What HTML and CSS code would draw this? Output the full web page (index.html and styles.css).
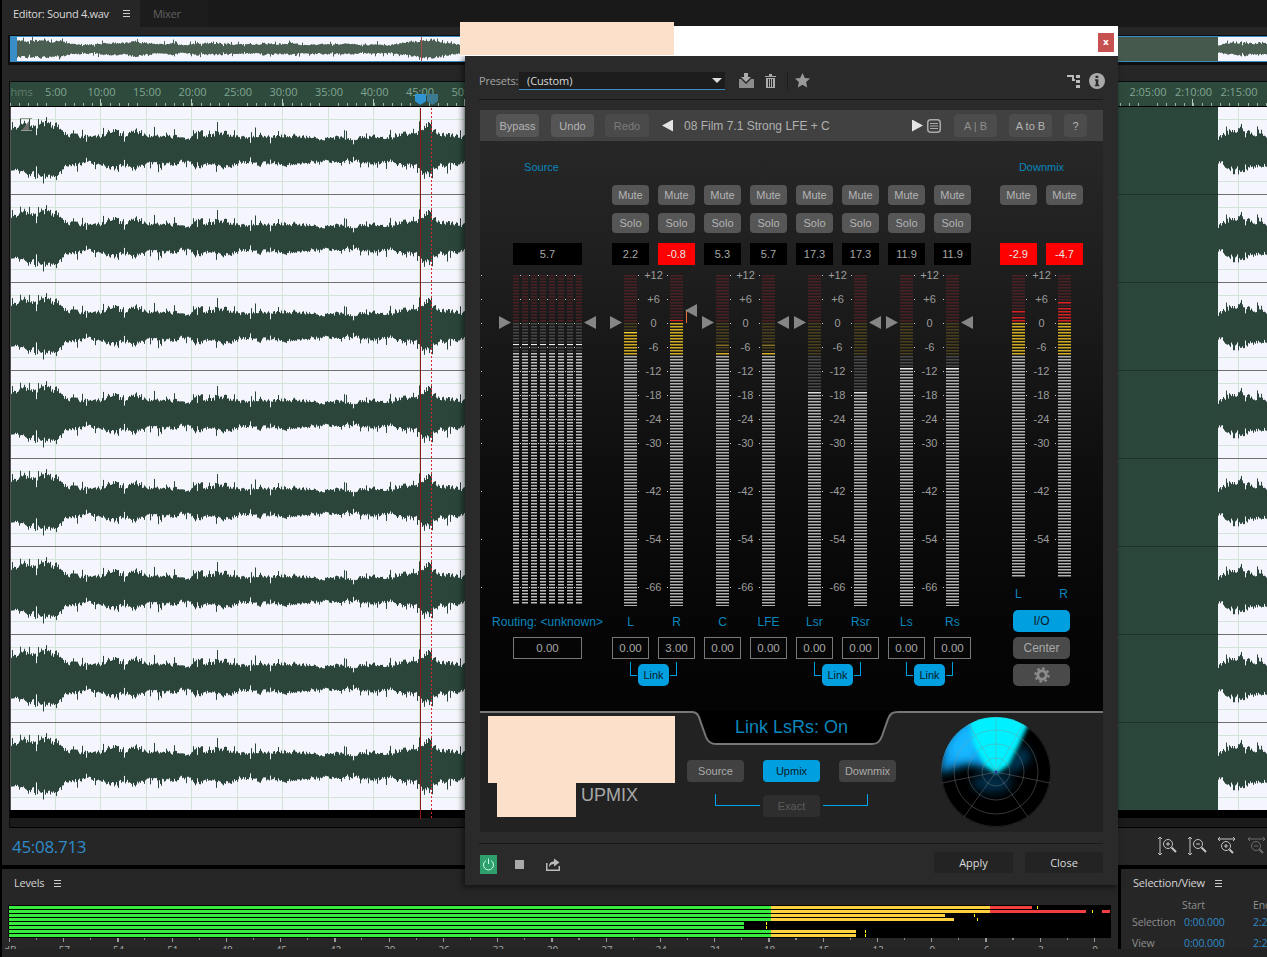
FILE: index.html
```html
<!DOCTYPE html>
<html lang="en">
<head>
<meta charset="utf-8">
<title>Editor: Sound 4.wav</title>
<link rel="stylesheet" href="styles.css">
</head>
<body>
<div class="app">
  <div class="tabs">
    <div class="tab active">Editor: Sound 4.wav<i class="ham"></i></div>
    <div class="tab dim">Mixer</div>
  </div>

  <div class="editor">
    <div class="ov">
      <div class="ovi">
        <svg id="ovwave" class="fill" width="1257" height="24"></svg>
        <div class="ovsel"></div>
        <div class="ovhandle"></div>
        <div class="ovhead"></div>
      </div>
    </div>

    <div class="track">
      <div class="ruler">
        <span class="hms">hms</span>
        <span>5:00</span><span>10:00</span><span>15:00</span><span>20:00</span><span>25:00</span><span>30:00</span><span>35:00</span><span>40:00</span><span>45:00</span><span>50:00</span>
        <span class="rgap"></span>
        <span>2:05:00</span><span>2:10:00</span><span>2:15:00</span>
        <i class="cti a"></i><i class="cti b"></i>
      </div>
      <div class="wave">
        <svg id="wave" class="fill" width="1256" height="703"></svg>
        <div class="wavesel"></div>
        <svg class="clipmark" width="12" height="13" viewBox="0 0 12 13"><path d="M0 .5H12M1 12.5H12" stroke="#999" fill="none"/><path d="M2 12L9 3V12Z" fill="#6c6c6c"/></svg>
      </div>
      <div class="wavefoot"></div>
      <div class="wavestrip"></div>
      <div class="head solid"></div>
      <div class="head dashed"></div>
    </div>

    <div class="transport">
      <span class="time">45:08.713</span>
      <div class="ztools">
        <svg width="20" height="20" viewBox="0 0 20 20"><path d="M3 1V19M1 3L3 1L5 3M1 17L3 19L5 17" class="zs"/><circle cx="11" cy="8" r="4.5" class="zs"/><path d="M14.5 11.5L19 16" class="zt"/><path d="M9 8H13M11 6V10" class="zs"/></svg>
        <svg width="20" height="20" viewBox="0 0 20 20"><path d="M3 1V19M1 3L3 1L5 3M1 17L3 19L5 17" class="zs"/><circle cx="11" cy="8" r="4.5" class="zs"/><path d="M14.5 11.5L19 16" class="zt"/><path d="M9 8H13" class="zs"/></svg>
        <svg width="20" height="20" viewBox="0 0 20 20"><path d="M1 3H18M3 1L1 3L3 5M16 1L18 3L16 5" class="zs"/><circle cx="9" cy="10" r="4.5" class="zs"/><path d="M12.5 13.5L16 17" class="zt"/><path d="M7 10H11M9 8V12" class="zs"/></svg>
        <svg class="zdim" width="20" height="20" viewBox="0 0 20 20"><path d="M1 3H18M3 1L1 3L3 5M16 1L18 3L16 5" class="zs"/><circle cx="9" cy="10" r="4.5" class="zs"/><path d="M12.5 13.5L16 17" class="zt"/><path d="M7 10H11" class="zs"/></svg>
      </div>
    </div>
  </div>

  <div class="bottom">
    <div class="levels">
      <div class="phead">Levels<i class="ham"></i></div>
      <div class="lv">
        <div class="lvbar"><b class="g"></b><b class="y" style="width:219px"></b><b class="r" style="width:42px"></b><i class="pk" style="left:1028px"></i></div>
        <div class="lvbar"><b class="g"></b><b class="y" style="width:219px"></b><b class="r" style="width:96px"></b><i class="pk" style="left:1083px"></i><i class="clip"></i></div>
        <div class="lvbar"><b class="g"></b><b class="y" style="width:174px"></b><i class="pk" style="left:965px"></i></div>
        <div class="lvbar"><b class="g"></b><b class="y" style="width:183px"></b><i class="pk" style="left:968px"></i></div>
        <div class="lvbar"><b class="g" style="width:735px"></b><i class="pk" style="left:757px"></i></div>
        <div class="lvbar"><b class="g" style="width:735px"></b><i class="pk" style="left:757px"></i></div>
        <div class="lvbar"><b class="g"></b><b class="y" style="width:85px"></b><i class="pk" style="left:856px"></i></div>
        <div class="lvbar"><b class="g"></b><b class="y" style="width:85px"></b><i class="pk" style="left:856px"></i></div>
      </div>
      <div class="lvticks"></div>
      <div class="lvlabels"><span>dB</span><span>57</span><span>54</span><span>51</span><span>48</span><span>45</span><span>42</span><span>39</span><span>36</span><span>33</span><span>30</span><span>27</span><span>24</span><span>21</span><span>18</span><span>15</span><span>12</span><span>9</span><span>6</span><span>3</span><span>0</span></div>
    </div>
    <div class="selview">
      <div class="phead">Selection/View<i class="ham"></i></div>
      <div class="svgrid">
        <span></span><span class="svh">Start</span><span class="svh">End</span>
        <span>Selection</span><span class="blue">0:00.000</span><span class="blue">2:20:41.000</span>
        <span>View</span><span class="blue">0:00.000</span><span class="blue">2:20:41.000</span>
      </div>
    </div>
  </div>
  <div class="status"></div>

  <div class="dlgwrap">
    <div class="titlebar">
      <div class="peach pt"></div>
      <div class="xbtn">x</div>
    </div>
    <div class="dlg">
      <div class="presets">
        <span class="plabel">Presets:</span>
        <div class="dd"><span>(Custom)</span><i class="ddarrow"></i></div>
        <svg class="pi1" width="17" height="15" viewBox="0 0 17 15"><path d="M6 0H10V4H13L8 9L3 4H6Z" fill="#aaa"/><path d="M1 6H3L8 11L13 6H16V15H1Z" fill="#8c8c8c"/></svg>
        <svg class="pi2" width="11" height="14" viewBox="0 0 11 14"><path d="M0 2H11V3H0ZM4 0H7V2H4Z" fill="#aaa"/><path d="M1 4H10V14H1ZM3 5V13H4V5ZM5 5V13H6V5ZM7 5V13H8V5Z" fill="#aaa" fill-rule="evenodd"/></svg>
        <i class="psep"></i>
        <svg class="pi3" width="15" height="15" viewBox="0 0 15 15"><path d="M7.5 0L9.8 5L15 5.6L11.1 9.1L12.2 14.5L7.5 11.8L2.8 14.5L3.9 9.1L0 5.6L5.2 5Z" fill="#9a9a9a"/></svg>
        <svg class="pi4" width="13" height="13" viewBox="0 0 13 13"><path d="M0 1H6V5H8" fill="none" stroke="#bbb" stroke-width="2"/><path d="M9 0H13V3H9ZM9 5H13V8H9ZM9 10H13V13H9Z" fill="#bbb"/></svg>
        <svg class="pi5" width="16" height="16" viewBox="0 0 16 16"><circle cx="8" cy="8" r="8" fill="#aaa"/><path d="M6.5 2.8H9.3V5H6.5ZM6 6.3H9.3V11.8H10.3V13.2H5.8V11.8H6.8V7.7H6Z" fill="#2a2a2a"/></svg>
      </div>

      <div class="plugin">
        <div class="ptool">
          <span class="tb b1">Bypass</span>
          <span class="tb b2">Undo</span>
          <span class="tb b3 off">Redo</span>
          <i class="arr l"></i>
          <span class="pname">08 Film 7.1 Strong LFE + C</span>
          <i class="arr r"></i>
          <svg class="listic" width="14" height="14" viewBox="0 0 14 14"><rect x=".75" y=".75" width="12.5" height="12.5" rx="3" fill="none" stroke="#aaa" stroke-width="1.5"/><path d="M3 4.5H11M3 7H11M3 9.5H11" stroke="#aaa" stroke-width="1.2"/></svg>
          <span class="tb b4 dimt">A | B</span>
          <span class="tb b5">A to B</span>
          <span class="tb b6">?</span>
        </div>

        <div class="pmain">
          <div class="group src">
            <div class="hdr hdrs">Source</div>
            <div class="val r4">5.7</div>
            <div class="srcm r5">
              <i class="m s" style="--lit:78px;--pk:68px;--pc:#eee"></i><i class="m s" style="--lit:78px;--pk:68px;--pc:#eee"></i><i class="m s" style="--lit:78px;--pk:68px;--pc:#eee"></i><i class="m s" style="--lit:78px;--pk:68px;--pc:#eee"></i><i class="m s" style="--lit:78px;--pk:68px;--pc:#eee"></i><i class="m s" style="--lit:78px;--pk:68px;--pc:#eee"></i><i class="m s" style="--lit:78px;--pk:68px;--pc:#eee"></i><i class="m s" style="--lit:78px;--pk:68px;--pc:#eee"></i>
              <div class="ticks"><b></b><b></b><b></b><b></b><b></b><b></b><b></b><b></b><b class="w"></b><b class="w"></b><b class="w"></b></div>
              <i class="tri rt srct"></i><i class="tri lf srct"></i>
            </div>
            <div class="nm r6">Routing: &lt;unknown&gt;</div>
            <div class="gain r7">0.00</div>
          </div>

          <div class="group chs">
            <span class="btn r2">Mute</span><span class="btn r2">Mute</span><span class="btn r2">Mute</span><span class="btn r2">Mute</span><span class="btn r2">Mute</span><span class="btn r2">Mute</span><span class="btn r2">Mute</span><span class="btn r2">Mute</span>
            <span class="btn r3">Solo</span><span class="btn r3">Solo</span><span class="btn r3">Solo</span><span class="btn r3">Solo</span><span class="btn r3">Solo</span><span class="btn r3">Solo</span><span class="btn r3">Solo</span><span class="btn r3">Solo</span>
            <div class="val r4">2.2</div><div class="val r4 hot">-0.8</div><div class="val r4">5.3</div><div class="val r4">5.7</div><div class="val r4">17.3</div><div class="val r4">17.3</div><div class="val r4">11.9</div><div class="val r4">11.9</div>

            <div class="pair r5">
              <i class="tri rt"></i>
              <i class="m" style="--lit:57px;--pk:56px;--pc:#f0d030"></i>
              <div class="sc"><span>+12</span><span>+6</span><span>0</span><span>-6</span><span>-12</span><span>-18</span><span>-24</span><span>-30</span><span class="w">-42</span><span class="w">-54</span><span class="w">-66</span></div>
              <i class="m" style="--lit:48px;--pk:44px;--pc:#e02020"></i>
              <i class="tri lf up"></i><i class="gmark"></i>
            </div>
            <div class="pair r5">
              <i class="tri rt"></i>
              <i class="m" style="--lit:78px;--pk:70px;--pc:#f0d030"></i>
              <div class="sc"><span>+12</span><span>+6</span><span>0</span><span>-6</span><span>-12</span><span>-18</span><span>-24</span><span>-30</span><span class="w">-42</span><span class="w">-54</span><span class="w">-66</span></div>
              <i class="m" style="--lit:78px;--pk:70px;--pc:#f0d030"></i>
              <i class="tri lf"></i>
            </div>
            <div class="pair r5">
              <i class="tri rt"></i>
              <i class="m" style="--lit:120px;--pk:117px;--pc:#ddd"></i>
              <div class="sc"><span>+12</span><span>+6</span><span>0</span><span>-6</span><span>-12</span><span>-18</span><span>-24</span><span>-30</span><span class="w">-42</span><span class="w">-54</span><span class="w">-66</span></div>
              <i class="m" style="--lit:120px;--pk:117px;--pc:#ddd"></i>
              <i class="tri lf"></i>
            </div>
            <div class="pair r5">
              <i class="tri rt"></i>
              <i class="m" style="--lit:96px;--pk:93px;--pc:#eee"></i>
              <div class="sc"><span>+12</span><span>+6</span><span>0</span><span>-6</span><span>-12</span><span>-18</span><span>-24</span><span>-30</span><span class="w">-42</span><span class="w">-54</span><span class="w">-66</span></div>
              <i class="m" style="--lit:96px;--pk:93px;--pc:#eee"></i>
              <i class="tri lf"></i>
            </div>

            <div class="nm r6">L</div><div class="nm r6">R</div><div class="nm r6">C</div><div class="nm r6">LFE</div><div class="nm r6">Lsr</div><div class="nm r6">Rsr</div><div class="nm r6">Ls</div><div class="nm r6">Rs</div>
            <div class="gain r7">0.00</div><div class="gain r7">3.00</div><div class="gain r7">0.00</div><div class="gain r7">0.00</div><div class="gain r7">0.00</div><div class="gain r7">0.00</div><div class="gain r7">0.00</div><div class="gain r7">0.00</div>
            <div class="lnk c1"><span>Link</span></div>
            <div class="lnk c5"><span>Link</span></div>
            <div class="lnk c7"><span>Link</span></div>
          </div>

          <div class="group dn">
            <div class="hdr">Downmix</div>
            <span class="btn r2">Mute</span><span class="btn r2">Mute</span>
            <div class="val r4 hot">-2.9</div><div class="val r4 hot">-4.7</div>
            <div class="pair r5 short">
              <i class="m" style="--lit:42px;--pk:36px;--pc:#e02020"></i>
              <div class="sc"><span>+12</span><span>+6</span><span>0</span><span>-6</span><span>-12</span><span>-18</span><span>-24</span><span>-30</span><span class="w">-42</span><span class="w">-54</span></div>
              <i class="m" style="--lit:33px;--pk:27px;--pc:#e02020"></i>
              <div class="dnames"><span>L</span><span>R</span></div>
            </div>
            <span class="wide on r6x">I/O</span>
            <span class="wide r7x">Center</span>
            <span class="wide r8x"><svg width="16" height="16" viewBox="0 0 16 16"><circle cx="8" cy="8" r="4.2" fill="none" stroke="#8c8c8c" stroke-width="3"/><circle cx="8" cy="8" r="6.6" fill="none" stroke="#8c8c8c" stroke-width="2.2" stroke-dasharray="2.6 2.58"/></svg></span>
          </div>
        </div>

        <div class="lower">
          <svg class="notch" width="623" height="36" viewBox="0 0 623 36"><path d="M212 0V1C218 1 219 6 221 12L226 26C228 31 231 33 236 33H392C398 33 400 30 402 25L408 8C410 3 412 1 418 1V0Z" fill="#000"/><path d="M0 1H212C218 1 219 6 221 12L226 26C228 31 231 33 236 33H392C398 33 400 30 402 25L408 8C410 3 412 1 418 1H623" fill="none" stroke="#777" stroke-width="2"/></svg>
          <div class="brand">
            <div class="peach p1"></div>
            <div class="brow"><div class="peach p2"></div><span class="upmix">UPMIX</span></div>
          </div>
          <div class="modes">
            <div class="ltitle">Link LsRs: On</div>
            <div class="mrow"><span class="mb">Source</span><span class="mb on">Upmix</span><span class="mb">Downmix</span></div>
            <div class="xrow"><i class="brk bl"></i><span class="mb ex">Exact</span><i class="brk br"></i></div>
          </div>
          <svg class="radar" width="114" height="112" viewBox="0 0 114 112">
            <defs>
              <clipPath id="rc"><path d="M56 55m-55 0a55 55 0 1 0 110 0a55 55 0 1 0 -110 0Z"/></clipPath>
              <filter id="b1" x="-40%" y="-40%" width="180%" height="180%"><feGaussianBlur stdDeviation="5"/></filter>
              <filter id="b2" x="-40%" y="-40%" width="180%" height="180%"><feGaussianBlur stdDeviation="2"/></filter>
            </defs>
            <g clip-path="url(#rc)">
              <rect width="114" height="112" fill="#000"/>
              <ellipse cx="52" cy="66" rx="20" ry="10" fill="#002a44" filter="url(#b1)"/>
              <path d="M0 56L2 30L20 4L45 0L50 52L28 46Z" fill="#0c9ff0" filter="url(#b1)"/>
              <path d="M8 30L24 8L40 20L34 42L14 42Z" fill="#14b8ff" filter="url(#b1)"/>
              <path d="M82 28L92 40L76 54L62 58Z" fill="#003a5c" filter="url(#b1)"/>
              <path d="M27 -4L34 28L44 48L56 57L69 48L79 28L88 8L88 -4Z" fill="#00f0ff" filter="url(#b2)"/>
            </g>
            <g fill="none" stroke="#8a8f90" stroke-opacity=".55" stroke-width=".7">
              <circle cx="56" cy="55" r="14"/><circle cx="56" cy="55" r="28"/><circle cx="56" cy="55" r="42"/><circle cx="56" cy="55" r="54.6" stroke-opacity=".3"/>
              <path d="M56 55V0M56 55L29 7M56 55L83 7M56 55L2 66M56 55L110 66M56 55L24 100M56 55L88 100"/>
            </g>
            <circle cx="56" cy="55" r="1.5" fill="#3030a0"/>
          </svg>
        </div>
      </div>

      <div class="foot">
        <span class="pwr"><svg width="13" height="13" viewBox="0 0 13 13"><path d="M4 2.6A5 5 0 1 0 9 2.6M6.5 .5V6" fill="none" stroke="#cfe" stroke-width="1"/></svg></span>
        <i class="stop"></i>
        <svg class="exp" width="14" height="13" viewBox="0 0 14 13"><path d="M.75 5V12.25H13.25V8" fill="none" stroke="#bbb" stroke-width="1.5"/><path d="M3 9C3 5 5 3.5 8 3.5V.5L13.5 4.5L8 8.5V6C6 6 4 7 3 9Z" fill="#bbb"/></svg>
        <span class="fb fa">Apply</span>
        <span class="fb">Close</span>
      </div>
    </div>
  </div>
</div>
<script src="script.js"></script>
</body>
</html>
```
FILE: styles.css
```css
* { box-sizing: border-box; }
html, body { margin: 0; padding: 0; background: #000; }
body { font-family: "Open Sans", "Liberation Sans", sans-serif; overflow: hidden; }
i, b { display: block; font-style: normal; font-weight: normal; }
svg { display: block; flex: none; }

.app { position: relative; width: 1267px; height: 957px; overflow: hidden; padding-left: 2px; background: #000; display: flex; flex-direction: column; }

.tabs { height: 27px; flex: none; display: flex; background: #191919; }
.tab { display: flex; align-items: center; font-size: 11px; letter-spacing: -.3px; }
.tab.active { width: 138px; padding-left: 11px; background: #262626; color: #d8d8d8; }
.tab.dim { width: 68px; padding-left: 13px; background: #1c1c1c; color: #626262; }
.ham { width: 7px; height: 7px; flex: none; background: repeating-linear-gradient(#ccc 0 1px, transparent 1px 3px); }
.tab .ham { margin-left: 14px; }

.editor { height: 838px; flex: none; background: #262626; position: relative; }
.ov { margin: 8px 0 0 6px; height: 30px; padding: 1px 0 3px 2px; background: #0e0e0e; }
.ovi { position: relative; height: 26px; border-top: 1px solid #3a8cc4; border-bottom: 1px solid #3a8cc4; background: #f4f5fd; }
.fill { position: absolute; left: 0; top: 0; }
.ovsel { position: absolute; left: 1100px; width: 108px; top: 0; bottom: 0; background: #46594d; }
.ovhandle { position: absolute; left: 0; top: 0; bottom: 0; width: 7px; background: #3a8ec8; }
.ovhead { position: absolute; left: 411px; top: 0; bottom: 0; width: 1px; background: #a34a4a; }

.track { position: relative; margin: 16px 0 0 7px; border-top: 1px solid #0c0c0c; border-left: 1px solid #0c0c0c; }
.ruler { position: relative; height: 25px; display: flex; overflow: hidden; border-bottom: 1px solid #000; color: #80a593; font-size: 11px; line-height: 20px; background-color: #2e4a3c;
  background-image:
    repeating-linear-gradient(90deg, transparent 0 45px, #b4c8bd 45px 45.5px),
    repeating-linear-gradient(90deg, #9ab5a7 0 .9px, transparent .9px 9.1px);
  background-size: 100% 7px, 100% 3px;
  background-position: 0 bottom, 0 bottom;
  background-repeat: no-repeat; }
.ruler span { flex: none; width: 45.5px; text-align: center; white-space: nowrap; }
.ruler .hms { width: 23.25px; color: #5f7d6e; }
.ruler .rgap { width: 637px; }
.cti { position: absolute; top: 12px; width: 11px; height: 11px; clip-path: polygon(0 0, 100% 0, 100% 65%, 50% 100%, 0 65%); }
.cti.a { left: 405px; background: #2f94d0; }
.cti.b { left: 417px; background: #3b7a90; }

.wave { position: relative; height: 703px; border-left: 1px solid #555; background-color: #f4f5fd; overflow: hidden;
  background-image:
    repeating-linear-gradient(180deg, transparent 0 12px, #d2e4d6 12px 13px, transparent 13px 43px, #2b453a 43px 44px, transparent 44px 74px, #d2e4d6 74px 75px, transparent 75px 87px, #707070 87px 88px),
    repeating-linear-gradient(90deg, transparent 0 44px, #d2e4d6 44px 45px, transparent 45px 45.5px); }
.wavesel { position: absolute; left: 1089px; width: 118px; top: 0; bottom: 0;
  background: repeating-linear-gradient(180deg, transparent 0 87px, #1f3229 87px 88px), #2b463a; }
.clipmark { position: absolute; left: 9px; top: 11px; }
.wavefoot { height: 8px; background: #000; }
.wavestrip { height: 9px; background: #1a1a1a; border-bottom: 1px solid #000; box-sizing: content-box; }
.head { position: absolute; top: 26px; height: 711px; width: 1px; }
.head.solid { left: 410px; background: #8c1818; }
.head.dashed { left: 421px; background: repeating-linear-gradient(#d42a2a 0 2px, transparent 2px 4px); }

.transport { height: 37px; display: flex; align-items: center; justify-content: space-between; padding-left: 10px; }
.time { color: #2f8bc8; font-size: 17px; letter-spacing: -.3px; }
.ztools { display: flex; gap: 10px; }
.ztools svg { margin-top: -1px; }
.zs { fill: none; stroke: #c4c4c4; stroke-width: 1; }
.zt { fill: none; stroke: #c4c4c4; stroke-width: 2; }
.zdim { opacity: .45; }

.bottom { margin-top: 4px; height: 80px; flex: none; display: flex; gap: 3px; overflow: hidden; }
.status { flex: 1; background: #232323; }
.levels { width: 1116px; flex: none; background: #262626; position: relative; overflow: hidden; }
.phead { height: 28px; padding: 0 0 0 12px; font-size: 11px; line-height: 16px; color: #d4d4d4; display: flex; align-items: center; letter-spacing: -.2px; }
.phead .ham { margin-left: 10px; }
.lv { margin: 8px 7px 0 6px; height: 33px; background: #000; padding: 1px 0 0 1px; display: flex; flex-direction: column; gap: 1px; }
.lvbar { position: relative; height: 3px; display: flex; }
.lvbar .g { width: 762px; background: #38ec3f; }
.lvbar .y { background: #fdd23e; }
.lvbar .r { background: #f23e3e; }
.lvbar .pk { position: absolute; top: 0; width: 1px; height: 3px; background: #ff0; }
.lvbar .clip { position: absolute; left: 1093px; width: 8px; top: 0; height: 3px; background: #f23e3e; }
.lvticks { height: 5px; margin: 0 0 0 7px;
  background-image: repeating-linear-gradient(90deg, #999 0 1px, transparent 1px 54.25px), repeating-linear-gradient(90deg, transparent 0 27px, #888 27px 28px, transparent 28px 54.25px);
  background-size: 100% 4px, 100% 2px; background-repeat: no-repeat; }
.lvlabels { display: flex; margin-left: -19px; font-size: 10px; line-height: 14px; color: #aaa; }
.lvlabels span { flex: none; width: 54.25px; text-align: center; }

.selview { flex: 1; background: #262626; }
.svgrid { display: grid; grid-template-columns: 52px 69px 80px; grid-template-rows: 14px 21px 21px; margin-top: 1px; font-size: 10.5px; line-height: 21px; color: #8f8f8f; padding-left: 11px; white-space: nowrap; letter-spacing: -.1px; }
.svh { line-height: 14px; }
.svgrid .svh:nth-child(2) { margin-left: -2px; }
.blue { color: #2f8bc8; }

.dlgwrap { position: absolute; left: 460px; top: 22px; width: 658px; }
.titlebar { position: relative; height: 30px; margin-top: 4px; background: #fff; }
.peach { background: #fce0ca; }
.pt { position: absolute; left: 0; top: -4px; width: 214px; height: 33px; }
.xbtn { position: absolute; left: 638px; top: 7px; width: 16px; height: 19px; background: #c75151; color: #fff; font: bold 9px/18px "DejaVu Sans", sans-serif; text-align: center; }
.dlg { margin-left: 5px; height: 829px; padding: 0 15px 0 14px; background: #2a2a2a; box-shadow: -2px 2px 6px rgba(0,0,0,.55); display: flex; flex-direction: column; }

.presets { height: 44px; padding-top: 16px; flex: none; display: flex; align-items: flex-start; border-bottom: 1px solid #191919; }
.plabel { width: 40px; flex: none; font-size: 11px; line-height: 18px; color: #a4a4a4; letter-spacing: -.2px; }
.dd { width: 206px; height: 18px; flex: none; display: flex; align-items: center; justify-content: space-between; padding: 0 3px 0 8px; background: #1d1d1d; border-bottom: 1px solid #3b8fc6; font-size: 11px; color: #d8d8d8; letter-spacing: -.1px; }
.ddarrow { width: 10px; height: 5px; background: #ddd; clip-path: polygon(0 0, 100% 0, 50% 100%); }
.pi1 { margin: 1px 0 0 13px; }
.pi2 { margin: 2px 0 0 10px; }
.psep { width: 1px; height: 18px; flex: none; margin-left: 11px; background: #1d1d1d; }
.pi3 { margin: 1px 0 0 7px; }
.pi4 { margin: 3px 0 0 257px; }
.pi5 { margin: 1px 0 0 9px; }

.plugin { margin: 10px 0 0 1px; height: 722px; flex: none; font-family: "Liberation Sans", Arial, sans-serif; display: flex; flex-direction: column; background: #222; }
.ptool { height: 31px; flex: none; padding-left: 16px; display: flex; align-items: center; background: #414141; color: #b0b0b0; font-size: 12px; }
.tb { height: 23px; flex: none; display: flex; align-items: center; justify-content: center; border-radius: 4px; background: #555; font-size: 11px; color: #b4b4b4; }
.tb.off { background: #4a4a4a; color: #7c7c7c; }
.b1 { width: 43px; }
.b2 { width: 43px; margin-left: 12px; }
.b3 { width: 44px; margin-left: 11px; }
.b4 { width: 43px; margin-left: 13px; background: #4c4c4c; color: #8f8f8f; }
.b5 { width: 43px; margin-left: 12px; background: #4c4c4c; }
.b6 { width: 23px; margin-left: 12px; background: #4c4c4c; }
.arr { width: 11px; height: 12px; flex: none; background: #e4e4e4; }
.arr.l { margin-left: 13px; clip-path: polygon(100% 0, 100% 100%, 0 50%); }
.arr.r { margin-left: 82px; clip-path: polygon(0 0, 100% 50%, 0 100%); }
.pname { width: 146px; flex: none; margin-left: 11px; white-space: nowrap; }
.listic { margin-left: 4px; }

.pmain { height: 570px; flex: none; padding: 19px 0 0 33px; display: flex; align-items: flex-start; background: linear-gradient(#272727 0, #1e1e1e 130px, #0e0e0e 330px, #060606 470px, #040404 100%); }
.group { display: grid; column-gap: 9px; grid-template-rows: 25px 28px 30px 32px 340px 22px 27px 22px; height: 546px; flex: none; }
.src { width: 69px; grid-template-columns: 69px; }
.chs { margin-left: 30px; grid-template-columns: repeat(8, 37px); }
.dn { margin-left: 29px; grid-template-columns: repeat(2, 37px); }
.hdr { grid-row: 1; grid-column: 1 / -1; height: 15px; text-align: center; color: #0a86bd; font-size: 11px; line-height: 15px; }
.hdrs { padding-right: 12px; }
.r2 { grid-row: 2; } .r3 { grid-row: 3; } .r4 { grid-row: 4; } .r5 { grid-row: 5; } .r6 { grid-row: 6; } .r7 { grid-row: 7; }
.btn { height: 20px; display: flex; align-items: center; justify-content: center; border-radius: 4px; background: #565656; color: #b4b4b4; font-size: 11px; }
.val { height: 22px; display: flex; align-items: center; justify-content: center; background: #000; color: #a8a8a8; font-size: 11px; }
.val.hot { background: #f00; color: #e6e6e6; }
.nm { height: 15px; display: flex; justify-content: center; white-space: nowrap; color: #0a86bd; font-size: 12px; line-height: 15px; letter-spacing: .05px; }
.gain { height: 22px; display: flex; align-items: center; justify-content: center; border: 1px solid #777; color: #a8a8a8; font-size: 11.5px; }

.srcm { position: relative; height: 329px; display: flex; gap: 3px; }
.pair { position: relative; grid-column: span 2; height: 331px; padding: 0 12px; display: flex; }
.short { height: 303px; }
.m { position: relative; width: 13px; flex: none; height: 100%; overflow: hidden;
  background: linear-gradient(#4a2024 0 48px, #4a3e1c 48px 80px, #484848 80px);
  -webkit-mask-image: repeating-linear-gradient(#000 0 1px, rgba(0,0,0,.5) 1px 2px, transparent 2px 3px);
  mask-image: repeating-linear-gradient(#000 0 1px, rgba(0,0,0,.5) 1px 2px, transparent 2px 3px); }
.m.s { width: 6px; background: linear-gradient(#4a2024 0 48px, #464646 48px); }
.m::after { content: ""; position: absolute; left: 0; right: 0; top: var(--lit); bottom: 0; background: linear-gradient(#d42020 0 48px, #d0aa20 48px 80px, #b0b0b0 80px) 0 calc(-1 * var(--lit)) / 100% 331px no-repeat; }
.m.s::after { background: #bcbcbc; }
.m::before { content: ""; position: absolute; z-index: 1; left: 0; right: 0; top: var(--pk); height: 2px; background: var(--pc); }
.sc { width: 33px; flex: none; margin-top: -12px; display: flex; flex-direction: column; font-size: 11px; color: #9c9c9c; }
.sc span { position: relative; flex: none; height: 24px; display: flex; align-items: center; justify-content: center; }
.sc span.w { margin-top: 24px; }
.sc span::before, .sc span::after { content: ""; position: absolute; top: 12px; width: 1px; height: 1px; background: #ccc; }
.sc span::before { left: 1px; }
.sc span::after { right: 2px; }
.ticks { position: absolute; left: -1px; top: -12px; width: 65px; display: flex; flex-direction: column; }
.ticks b { position: relative; height: 24px; background: repeating-linear-gradient(90deg, transparent 0 8px, #ccc 8px 9px) 0 12px / 100% 1px no-repeat; }
.ticks b.w { margin-top: 24px; }
.ticks b::before { content: ""; position: absolute; left: -31px; top: 12px; width: 1px; height: 1px; background: #ccc; }
.tri { position: absolute; top: 41px; width: 12px; height: 13px; background: #868686; }
.tri.rt { left: -2px; clip-path: polygon(0 0, 100% 50%, 0 100%); }
.tri.lf { right: -2px; clip-path: polygon(100% 0, 100% 100%, 0 50%); }
.tri.up { top: 29px; }
.tri.srct.rt { left: -14px; }
.tri.srct.lf { right: -14px; }
.gmark { position: absolute; right: 8px; top: 36px; width: 1px; height: 12px; background: #e8703a; }
.dnames { position: absolute; left: 12px; right: 12px; top: 312px; display: flex; justify-content: space-between; padding: 0 3px; color: #0a86bd; font-size: 12px; line-height: 14px; }

.lnk { position: relative; grid-row: 8; grid-column: span 2; display: flex; justify-content: center; }
.lnk span { width: 31px; height: 22px; border-radius: 5px; background: #009fe0; color: #0b1c26; font-size: 11px; display: flex; align-items: center; justify-content: center; }
.lnk::before, .lnk::after { content: ""; position: absolute; top: -2px; width: 6px; height: 13px; border-bottom: 1px solid #009fe0; }
.lnk::before { left: 18px; border-left: 1px solid #009fe0; }
.lnk::after { right: 18px; border-right: 1px solid #009fe0; }
.c1 { grid-column: 1 / span 2; } .c5 { grid-column: 5 / span 2; } .c7 { grid-column: 7 / span 2; }

.wide { grid-column: 1 / -1; margin: 0 13px; height: 22px; border-radius: 5px; background: #4a4a4a; color: #a8a8a8; font-size: 12px; display: flex; align-items: center; justify-content: center; }
.wide.on { background: #009fe0; color: #0b1c26; }
.r6x { grid-row: 6; margin-top: -5px; }
.r7x { grid-row: 7; }
.r8x { grid-row: 8; }

.lower { position: relative; flex: 1; display: flex; align-items: flex-start; background: #222; }
.notch { position: absolute; left: 0; top: 0; }
.brand { width: 187px; margin: 5px 0 0 8px; flex: none; }
.p1 { height: 67px; }
.brow { display: flex; }
.p2 { width: 79px; height: 34px; margin-left: 9px; }
.upmix { margin-left: 5px; font-size: 18px; line-height: 24px; color: #a8a8a8; }
.modes { position: relative; width: 209px; margin-left: 12px; flex: none; }
.ltitle { height: 33px; text-align: center; color: #0a86bd; font-size: 18px; line-height: 32px; }
.mrow { margin-top: 16px; display: flex; justify-content: space-between; }
.mb { width: 57px; height: 22px; flex: none; border-radius: 4px; background: #414141; color: #aaa; font-size: 11px; display: flex; align-items: center; justify-content: center; }
.mb.on { background: #009fe0; color: #0b1c26; }
.xrow { margin-top: 13px; display: flex; align-items: flex-start; }
.mb.ex { margin: 0 3px; background: #2e2e2e; color: #5c5c5c; }
.brk { height: 12px; flex: none; margin-top: -1px; border-bottom: 1px solid #00a4ee; }
.bl { width: 45px; margin-left: 28px; border-left: 1px solid #00a4ee; }
.br { width: 45px; border-right: 1px solid #00a4ee; }
.radar { margin: 6px 0 0 44px; }

.foot { margin-top: 11px; height: 42px; flex: none; border-top: 1px solid #191919; display: flex; align-items: center; padding-left: 1px; }
.pwr { width: 17px; height: 19px; flex: none; background: #2e9e6c; display: flex; align-items: center; justify-content: center; }
.stop { width: 9px; height: 9px; flex: none; margin-left: 18px; background: #aaa; }
.exp { margin-left: 22px; }
.fb { width: 78px; height: 21px; flex: none; margin: 0 0 4px 12px; display: flex; align-items: center; justify-content: center; background: #232323; color: #dcdcdc; font-size: 11px; }
.fa { width: 79px; margin-left: 374px; }
```
FILE: script.js
```js
var ENV = [[0,22],[9,25],[24,27],[34,28],[49,25],[56,17],[69,15],[89,15],[99,19],[119,20],[124,22],[139,15],[154,14],[179,15],[187,18],[214,17],[229,14],[249,16],[264,14],[284,16],[329,13],[367,15],[379,12],[409,22],[419,26],[429,20],[449,14],[1207,14],[1214,16],[1229,21],[1256,16]];

function amp(x) {
  for (var i = 1; i < ENV.length; i++) {
    if (x <= ENV[i][0]) {
      var a = ENV[i - 1], b = ENV[i];
      return a[1] + (b[1] - a[1]) * (x - a[0]) / (b[0] - a[0]);
    }
  }
  return 15;
}

function rng(seed) {
  return function () {
    seed = (seed + 0x6D2B79F5) | 0;
    var t = Math.imul(seed ^ (seed >>> 15), 1 | seed);
    t = (t + Math.imul(t ^ (t >>> 7), 61 | t)) ^ t;
    return ((t ^ (t >>> 14)) >>> 0) / 4294967296;
  };
}

function trace(w, cy, scale, from, seed) {
  var r = rng(seed), d = "", u = 0.5, v = 0.5, slow = 1;
  for (var x = from; x < w; x++) {
    if (x % 12 === 0) slow = 0.84 + 0.3 * r();
    u = 0.3 * u + 0.7 * r();
    v = 0.3 * v + 0.7 * r();
    var e = amp(x) * scale * slow;
    var up = e * (0.72 + 0.38 * u);
    var dn = e * (0.72 + 0.38 * v);
    var s = r();
    if (s < 0.09) up += scale * (2 + 7 * r());
    if (s > 0.92) dn += scale * (2 + 6 * r());
    if (s > 0.5 && s < 0.515) { up *= 0.6; dn *= 0.65; }
    d += "M" + (x + 0.5) + " " + (cy - up).toFixed(1) + "V" + (cy + dn).toFixed(1);
  }
  return d;
}

function addPath(svg, d, color) {
  var p = document.createElementNS("http://www.w3.org/2000/svg", "path");
  p.setAttribute("d", d);
  p.setAttribute("stroke", color);
  p.setAttribute("stroke-width", "1");
  p.setAttribute("fill", "none");
  svg.appendChild(p);
}

var wave = document.getElementById("wave");
for (var c = 0; c < 8; c++) {
  addPath(wave, trace(1256, 43 + 88 * c, 1, 0, 11), "#2b453a");
}
addPath(document.getElementById("ovwave"), trace(1257, 12, 0.36, 7, 5), "#4a5f52");
```
